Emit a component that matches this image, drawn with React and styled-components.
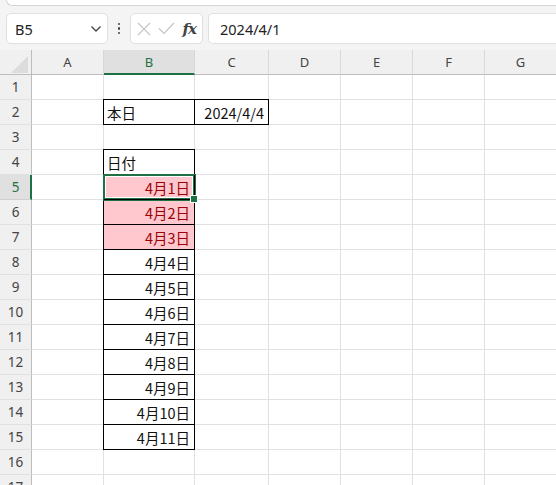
import styled, { createGlobalStyle } from "styled-components";

const GlobalStyle = createGlobalStyle`
    html, body {
        margin: 0;
        padding: 0;
        background: #ffffff;
        overflow: hidden;
    }
    * { box-sizing: border-box; }
`;

const GREEN = "#1e7145";
const GRID = "#e1e1e1";

const columns = ["A", "B", "C", "D", "E", "F", "G"];

// cell contents keyed by "col-row"
const cells = {
    "B-2": { text: "本日", boxed: true },
    "C-2": { text: "2024/4/4", boxed: true, align: "right" },
    "B-4": { text: "日付", boxed: true },
};
for (let d = 1; d <= 11; d++) {
    cells[`B-${d + 4}`] = {
        text: `4月${d}日`,
        boxed: true,
        align: "right",
        pink: d <= 3,
    };
}

export default function App() {
    const rows = Array.from({ length: 17 }, (_, i) => i + 1);

    return (
        <Page>
            <GlobalStyle />
            <Ribbon />
            <Toolbar>
                <NameBox>
                    <span>B5</span>
                    <svg width="12" height="8" viewBox="0 0 12 8">
                        <path d="M1.5 1.5 L6 6 L10.5 1.5" fill="none" stroke="#444" strokeWidth="1.3" />
                    </svg>
                </NameBox>
                <Dots>
                    <i /><i /><i />
                </Dots>
                <FxBox>
                    <svg width="14" height="14" viewBox="0 0 14 14">
                        <path d="M1 1 L13 13 M13 1 L1 13" stroke="#c4c4c4" strokeWidth="1.2" />
                    </svg>
                    <svg width="17" height="13" viewBox="0 0 17 13">
                        <path d="M1 6.5 L6 11.5 L16 1" fill="none" stroke="#c4c4c4" strokeWidth="1.2" />
                    </svg>
                    <Fx>fx</Fx>
                </FxBox>
                <FormulaBox>2024/4/1</FormulaBox>
            </Toolbar>
            <Sheet>
                <Corner>
                    <svg width="17" height="17" viewBox="0 0 17 17">
                        <path d="M17 0 L17 17 L0 17 Z" fill="#dcdcdc" />
                    </svg>
                </Corner>
                {columns.map(c => (
                    <ColHeader key={c} $active={c === "B"}>{c}</ColHeader>
                ))}
                {rows.map(r => (
                    <Row key={r}>
                        <RowHeader $active={r === 5}>{r}</RowHeader>
                        {columns.map(c => {
                            const cell = cells[`${c}-${r}`] || {};
                            return (
                                <Cell key={c}
                                    $boxed={cell.boxed}
                                    $pink={cell.pink}
                                    $align={cell.align}
                                    $selected={c === "B" && r === 5}>
                                    {cell.text}
                                </Cell>
                            );
                        })}
                    </Row>
                ))}
            </Sheet>
        </Page>
    );
}

const Page = styled.div`
    width: 556px;
    height: 485px;
    overflow: hidden;
    background: #f4f4f4;
    font-family: "Noto Sans", "Liberation Sans", sans-serif;
`;

const Ribbon = styled.div`
    height: 6px;
    margin-left: 6px;
    background: #ffffff;
    border: 1px solid #d6d6d6;
    border-top: none;
    border-right: none;
    border-bottom-left-radius: 6px;
`;

const Toolbar = styled.div`
    height: 44px;
    display: flex;
    align-items: flex-start;
    padding: 7px 0 0 6px;
    gap: 0;
`;

const Box = styled.div`
    height: 31px;
    background: #ffffff;
    border: 1px solid #e0e0e0;
    border-radius: 5px;
    display: flex;
    align-items: center;
`;

const NameBox = styled(Box)`
    width: 102px;
    padding: 0 5px 0 8px;
    justify-content: space-between;
    font-size: 14.5px;
    color: #222;
`;

const Dots = styled.div`
    width: 22px;
    height: 31px;
    display: flex;
    flex-direction: column;
    align-items: center;
    justify-content: center;
    gap: 2px;

    i {
        width: 2.5px;
        height: 2.5px;
        border-radius: 50%;
        background: #444;
    }
`;

const FxBox = styled(Box)`
    width: 73px;
    padding: 0 4px 0 6px;
    justify-content: space-between;
`;

const Fx = styled.span`
    font-family: "DejaVu Serif", "Liberation Serif", serif;
    font-style: italic;
    font-weight: bold;
    font-size: 15px;
    color: #444;
    letter-spacing: -1px;
    padding-right: 2px;
`;

const FormulaBox = styled(Box)`
    flex: 1;
    margin-left: 5px;
    padding-left: 11px;
    border-right: none;
    border-radius: 5px 0 0 5px;
    font-size: 14.5px;
    color: #222;
`;

const Sheet = styled.div`
    display: grid;
    grid-template-columns: 32px 72px 91px 74px 72px 72px 72px 72px;
    grid-auto-rows: 25px;
    background: #ffffff;
`;

const Row = styled.div`
    display: contents;
`;

const HeaderBase = styled.div`
    background: #f0f0f0;
    color: #444;
    font-size: 13px;
    display: flex;
    align-items: center;
    justify-content: center;
`;

const Corner = styled(HeaderBase)`
    border-right: 1px solid #bdbdbd;
    border-bottom: 1px solid #bdbdbd;
    justify-content: flex-end;
    align-items: flex-end;
    padding: 0 3px 1px 0;
`;

const ColHeader = styled(HeaderBase)`
    border-right: 1px solid #d8d8d8;
    border-bottom: ${p => (p.$active ? `2px solid ${GREEN}` : "1px solid #bdbdbd")};
    background: ${p => (p.$active ? "#e0e0e0" : "#f0f0f0")};
    color: ${p => (p.$active ? GREEN : "#444")};
    padding-top: ${p => (p.$active ? "1px" : "0")};
`;

const RowHeader = styled(HeaderBase)`
    border-right: ${p => (p.$active ? `2px solid ${GREEN}` : "1px solid #bdbdbd")};
    border-bottom: 1px solid ${p => (p.$active ? "#d0d0d0" : GRID)};
    background: ${p => (p.$active ? "#e0e0e0" : "#f0f0f0")};
    color: ${p => (p.$active ? GREEN : "#444")};
    font-size: 13.5px;
    padding-left: ${p => (p.$active ? "1px" : "0")};
`;

const Cell = styled.div`
    position: relative;
    display: flex;
    align-items: center;
    justify-content: ${p => (p.$align === "right" ? "flex-end" : "flex-start")};
    padding: 1px 4px 0 3px;
    font-family: "Noto Sans CJK JP", "Noto Sans", sans-serif;
    font-size: 14.5px;
    white-space: nowrap;
    color: ${p => (p.$pink ? "#9c0006" : "#111")};
    background: ${p => (p.$pink ? "#ffc7ce" : "#ffffff")};
    border-right: 1px solid ${p => (p.$boxed ? "#000" : GRID)};
    border-bottom: 1px solid ${p => (p.$boxed ? "#000" : GRID)};
    z-index: ${p => (p.$selected ? 3 : p.$boxed ? 2 : 1)};
    box-shadow: ${p =>
        p.$selected
            ? `0 0 0 1px ${GREEN}, inset 0 0 0 1px ${GREEN}, inset 0 0 0 2px #ffffff`
            : p.$boxed
                ? "-1px 0 0 #000, 0 -1px 0 #000, -1px -1px 0 #000"
                : "none"};

    ${p => p.$selected && `
        &::after {
            content: "";
            position: absolute;
            right: -4px;
            bottom: -4px;
            width: 6px;
            height: 6px;
            background: ${GREEN};
            border: 1px solid #ffffff;
        }
    `}
`;
